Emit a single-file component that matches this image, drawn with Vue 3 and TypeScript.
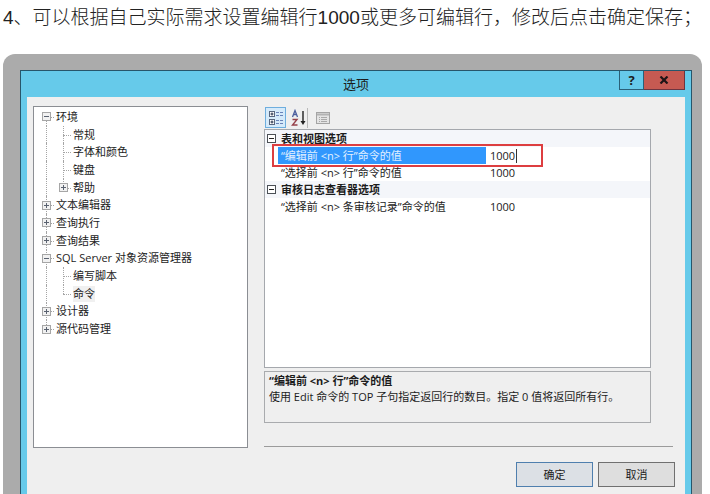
<script setup lang="ts">
import { computed, ref } from 'vue'

interface TreeNode {
  label: string
  level: 1 | 2
  mark?: 'plus' | 'minus'
  edge?: 'first' | 'last'
}

interface Option {
  id: string
  name: string
}

const nodes: TreeNode[] = [
  { label: '环境', level: 1, mark: 'minus', edge: 'first' },
  { label: '常规', level: 2 },
  { label: '字体和颜色', level: 2 },
  { label: '键盘', level: 2 },
  { label: '帮助', level: 2, mark: 'plus', edge: 'last' },
  { label: '文本编辑器', level: 1, mark: 'plus' },
  { label: '查询执行', level: 1, mark: 'plus' },
  { label: '查询结果', level: 1, mark: 'plus' },
  { label: 'SQL Server 对象资源管理器', level: 1, mark: 'minus' },
  { label: '编写脚本', level: 2 },
  { label: '命令', level: 2, edge: 'last' },
  { label: '设计器', level: 1, mark: 'plus' },
  { label: '源代码管理', level: 1, mark: 'plus', edge: 'last' },
]

const groups: { title: string; options: Option[] }[] = [
  {
    title: '表和视图选项',
    options: [
      { id: 'edit', name: '“编辑前 <n> 行”命令的值' },
      { id: 'select', name: '“选择前 <n> 行”命令的值' },
    ],
  },
  {
    title: '审核日志查看器选项',
    options: [{ id: 'audit', name: '“选择前 <n> 条审核记录”命令的值' }],
  },
]

const page = ref('命令')
const active = ref('edit')
const values = ref<Record<string, string>>({ edit: '1000', select: '1000', audit: '1000' })

const activeName = computed(
  () => groups.flatMap((g) => g.options).find((o) => o.id === active.value)?.name ?? '',
)
</script>

<template>
  <main class="article">
    <p class="step"><span class="num">4</span>、可以根据自己实际需求设置编辑行<span class="num">1000</span>或更多可编辑行，修改后点击确定保存；</p>

    <div class="frame">
      <section class="dialog" aria-labelledby="dialog-title">
        <header class="titlebar">
          <h1 id="dialog-title">选项</h1>
          <div class="caption">
            <button type="button" class="help" aria-label="帮助">?</button>
            <button type="button" class="close" aria-label="关闭">
              <svg width="10" height="8" viewBox="0 0 10 8"><path d="M1.5 .5 8.5 7.5M8.5 .5 1.5 7.5" stroke="#1d1416" stroke-width="2.2" /></svg>
            </button>
          </div>
        </header>

        <div class="body">
          <ul class="tree">
            <li v-for="n in nodes" :key="n.label" :class="['node', 'level-' + n.level, n.edge]">
              <span v-if="n.level === 2" class="trunk"></span>
              <span class="joint">
                <svg v-if="n.mark" width="9" height="9" viewBox="0 0 9 9">
                  <rect x=".5" y=".5" width="8" height="8" fill="#f1f1f1" stroke="#a6a6a6" />
                  <path :d="n.mark === 'plus' ? 'M2 4.5h5M4.5 2v5' : 'M2 4.5h5'" stroke="#5a6270" />
                </svg>
              </span>
              <button type="button" :class="['label', { current: page === n.label }]" @click="page = n.label">{{ n.label }}</button>
            </li>
          </ul>

          <div class="pane">
            <div class="tools">
              <button type="button" class="tool on" aria-label="按分类顺序">
                <svg width="16" height="16" viewBox="0 0 16 16" fill="none">
                  <rect x="1.5" y="1.5" width="5" height="5" fill="#fff" stroke="#59677f" />
                  <rect x="1.5" y="9.5" width="5" height="5" fill="#fff" stroke="#59677f" />
                  <path d="M2.500 4h3M4 2.500v3M2.500 12h3M4 10.500v3" stroke="#1e2b45" />
                  <path d="M8 2.500h3M12 2.500h3M8 5.500h3M12 5.500h3M8 10.500h3M12 10.500h3M8 13.500h3M12 13.500h3" stroke="#6a83b8" />
                </svg>
              </button>
              <button type="button" class="tool" aria-label="字母顺序">
                <svg width="16" height="18" viewBox="0 0 16 18" fill="none">
                  <path d="M1.500 8 4 1.500 6.500 8M2.500 5.500h3" stroke="#4c5f9e" stroke-width="1.300" />
                  <path d="M1.500 10.500H6L1.500 16H6.500" stroke="#96414a" stroke-width="1.400" />
                  <path d="M12 2v12" stroke="#222" stroke-width="1.400" />
                  <path d="M9.500 12h5L12 16z" fill="#222" />
                </svg>
              </button>
              <span class="divider"></span>
              <button type="button" class="tool" aria-label="属性页" disabled>
                <svg width="16" height="16" viewBox="0 0 16 16" fill="none">
                  <rect x="1.500" y="2.500" width="13" height="11" fill="#e4e4e4" stroke="#a4a4a4" />
                  <path d="M2 4.500h12" stroke="#b3b3b3" stroke-width="2" />
                  <path d="M4 7.500h1M6 7.500h6M4 9.500h1M6 9.500h6M4 11.500h1M6 11.500h6" stroke="#a9a9a9" />
                </svg>
              </button>
            </div>

            <div class="grid">
              <table>
                <colgroup>
                  <col class="col-gutter" />
                  <col class="col-name" />
                  <col />
                </colgroup>
                <tbody v-for="g in groups" :key="g.title">
                  <tr class="category">
                    <td class="gutter">
                      <svg width="9" height="9" viewBox="0 0 9 9"><rect x=".5" y=".5" width="8" height="8" fill="#fff" stroke="#4b5056" /><path d="M2 4.500h5" stroke="#222" /></svg>
                    </td>
                    <th colspan="2" scope="rowgroup">{{ g.title }}</th>
                  </tr>
                  <tr v-for="o in g.options" :key="o.id" :class="{ active: active === o.id }">
                    <td class="gutter"></td>
                    <td class="name"><label :for="o.id">{{ o.name }}</label></td>
                    <td class="value">
                      <input :id="o.id" v-model="values[o.id]" type="text" size="4" @focus="active = o.id" />
                      <i v-if="active === o.id" class="caret"></i>
                    </td>
                  </tr>
                </tbody>
              </table>
              <div class="highlight"></div>
            </div>

            <div class="hint">
              <strong>{{ activeName }}</strong>
              <p>使用 Edit 命令的 TOP 子句指定返回行的数目。指定 0 值将返回所有行。</p>
            </div>
          </div>
        </div>

        <footer class="actions">
          <button type="submit" class="default">确定</button>
          <button type="button">取消</button>
        </footer>
      </section>
    </div>
  </main>
</template>

<style>
body {
  margin: 0;
  background: #fff;
}
</style>

<style scoped>
.article {
  box-sizing: border-box;
  min-height: 100vh;
  display: flex;
  flex-direction: column;
  padding: 0 8px 0 3px;
  font-family: "Open Sans", "Noto Sans CJK SC", sans-serif;
  font-size: 11px;
  line-height: 16px;
  color: #1c1c1c;
}
button,
input {
  font: inherit;
  color: inherit;
  margin: 0;
  padding: 0;
  border: 0;
  border-radius: 0;
  background: none;
}
svg {
  display: block;
}
.step {
  margin: 0;
  height: 54px;
  font: 300 19px/32px "Noto Sans CJK SC", sans-serif;
  color: #222;
  white-space: nowrap;
}
.num {
  font-family: "Liberation Sans", sans-serif;
  font-weight: 400;
}
.frame {
  flex: 1;
  display: flex;
  padding: 16px 10px 0 17px;
  background: #ababab;
  border-radius: 12px 12px 0 0;
}
.dialog {
  flex: 1;
  display: flex;
  flex-direction: column;
  border: 1px solid #27566b;
  border-bottom: 0;
  background: #66caea;
  padding: 0 6px;
}
.titlebar {
  display: grid;
  grid-template-columns: 1fr auto 1fr;
  height: 26px;
}
.titlebar h1 {
  grid-column: 2;
  margin: 0;
  font-size: 13px;
  line-height: 26px;
  font-weight: 400;
}
.caption {
  justify-self: end;
  display: flex;
  height: 19px;
}
.caption button {
  box-sizing: border-box;
  border: 1px solid #2a6078;
  border-top: 0;
  display: flex;
  align-items: center;
  justify-content: center;
}
.help {
  width: 25px;
  font-weight: 700;
  font-size: 13px;
}
.caption .close {
  width: 41px;
  border-color: #6d3540;
  border-left: 0;
  background: #c65a52;
}
.body {
  display: flex;
  gap: 16px;
  padding: 9px 12px 0 6px;
  background: #efefef;
}
.tree {
  box-sizing: border-box;
  flex: 0 0 215px;
  height: 342px;
  margin: 0;
  padding: 1px 0 109px 8px;
  border: 1px solid #8b8e93;
  background: #fff;
  list-style: none;
  display: flex;
  flex-direction: column;
}
.node {
  flex: 1;
  min-height: 0;
  display: flex;
  align-items: center;
}
.trunk,
.joint {
  position: relative;
  align-self: stretch;
  display: flex;
  align-items: center;
}
.trunk {
  width: 17px;
}
.joint {
  width: 14px;
}
.trunk::before,
.joint::before {
  content: "";
  position: absolute;
  left: 4px;
  top: 0;
  bottom: 0;
  border-left: 1px dotted #a5a5a5;
}
.joint::after {
  content: "";
  position: absolute;
  left: 4px;
  right: 2px;
  top: 50%;
  border-top: 1px dotted #a5a5a5;
}
.first .joint::before {
  top: 50%;
}
.last .joint::before {
  bottom: 50%;
}
.joint svg {
  position: relative;
  z-index: 1;
}
.label {
  line-height: 16px;
  white-space: nowrap;
}
.label.current {
  background: #f0f0f0;
}
.pane {
  flex: 1;
  min-width: 0;
  display: flex;
  flex-direction: column;
  padding-right: 22px;
}
.tools {
  display: flex;
  align-items: center;
  gap: 1px;
  height: 23px;
}
.tool {
  box-sizing: border-box;
  width: 21px;
  height: 21px;
  margin-left: 1px;
  display: flex;
  align-items: center;
  justify-content: center;
}
.tool.on {
  border: 1px solid #6eaede;
  background: #d5eafa;
}
.divider {
  width: 1px;
  height: 20px;
  margin: 0 0 0 -3px;
  background: #b9b9b9;
}
.divider + .tool {
  margin-left: 3px;
}
.grid {
  box-sizing: border-box;
  position: relative;
  height: 239px;
  border: 1px solid #a5a8ad;
  background: #fff;
}
table {
  width: 100%;
  table-layout: fixed;
  border-collapse: collapse;
}
.col-gutter {
  width: 13px;
}
.col-name {
  width: 208px;
}
td,
th {
  height: 17px;
  padding: 0;
  line-height: 16px;
  text-align: left;
  white-space: nowrap;
}
.category {
  background: #f4f6fa;
}
.category th {
  padding-left: 3px;
}
.gutter svg {
  margin-left: 2px;
}
.name {
  padding-left: 3px;
}
.name label {
  display: block;
}
.active .name {
  background: #3097fd;
  color: #e2f0ff;
}
.value {
  padding-left: 4px;
}
.value input {
  width: 26px;
  height: 16px;
  outline: 0;
  vertical-align: top;
}
.caret {
  display: inline-block;
  width: 1px;
  height: 14px;
  margin-top: 1px;
  background: #333;
  vertical-align: top;
}
.highlight {
  position: absolute;
  left: 7px;
  top: 14px;
  width: 267px;
  height: 19px;
  border: 2px solid #dd3e40;
  pointer-events: none;
}
.hint {
  box-sizing: border-box;
  height: 52px;
  margin-top: 3px;
  padding: 1px 4px;
  border: 1px solid #a9abae;
}
.hint strong {
  display: block;
}
.hint p {
  margin: 0;
}
.actions {
  flex: 1;
  display: flex;
  align-items: flex-start;
  justify-content: flex-end;
  gap: 5px;
  padding: 14px 10px 7px 0;
  background: #efefef;
}
.actions button {
  box-sizing: border-box;
  width: 77px;
  height: 25px;
  border: 1px solid #707070;
  background: #dedede;
}
.actions .default {
  border-color: #4f7fae;
  background: #dce0e5;
}
.pane::after {
  content: "";
  height: 1px;
  margin: 23px -22px 0 0;
  background: #9b9b9b;
}
</style>
